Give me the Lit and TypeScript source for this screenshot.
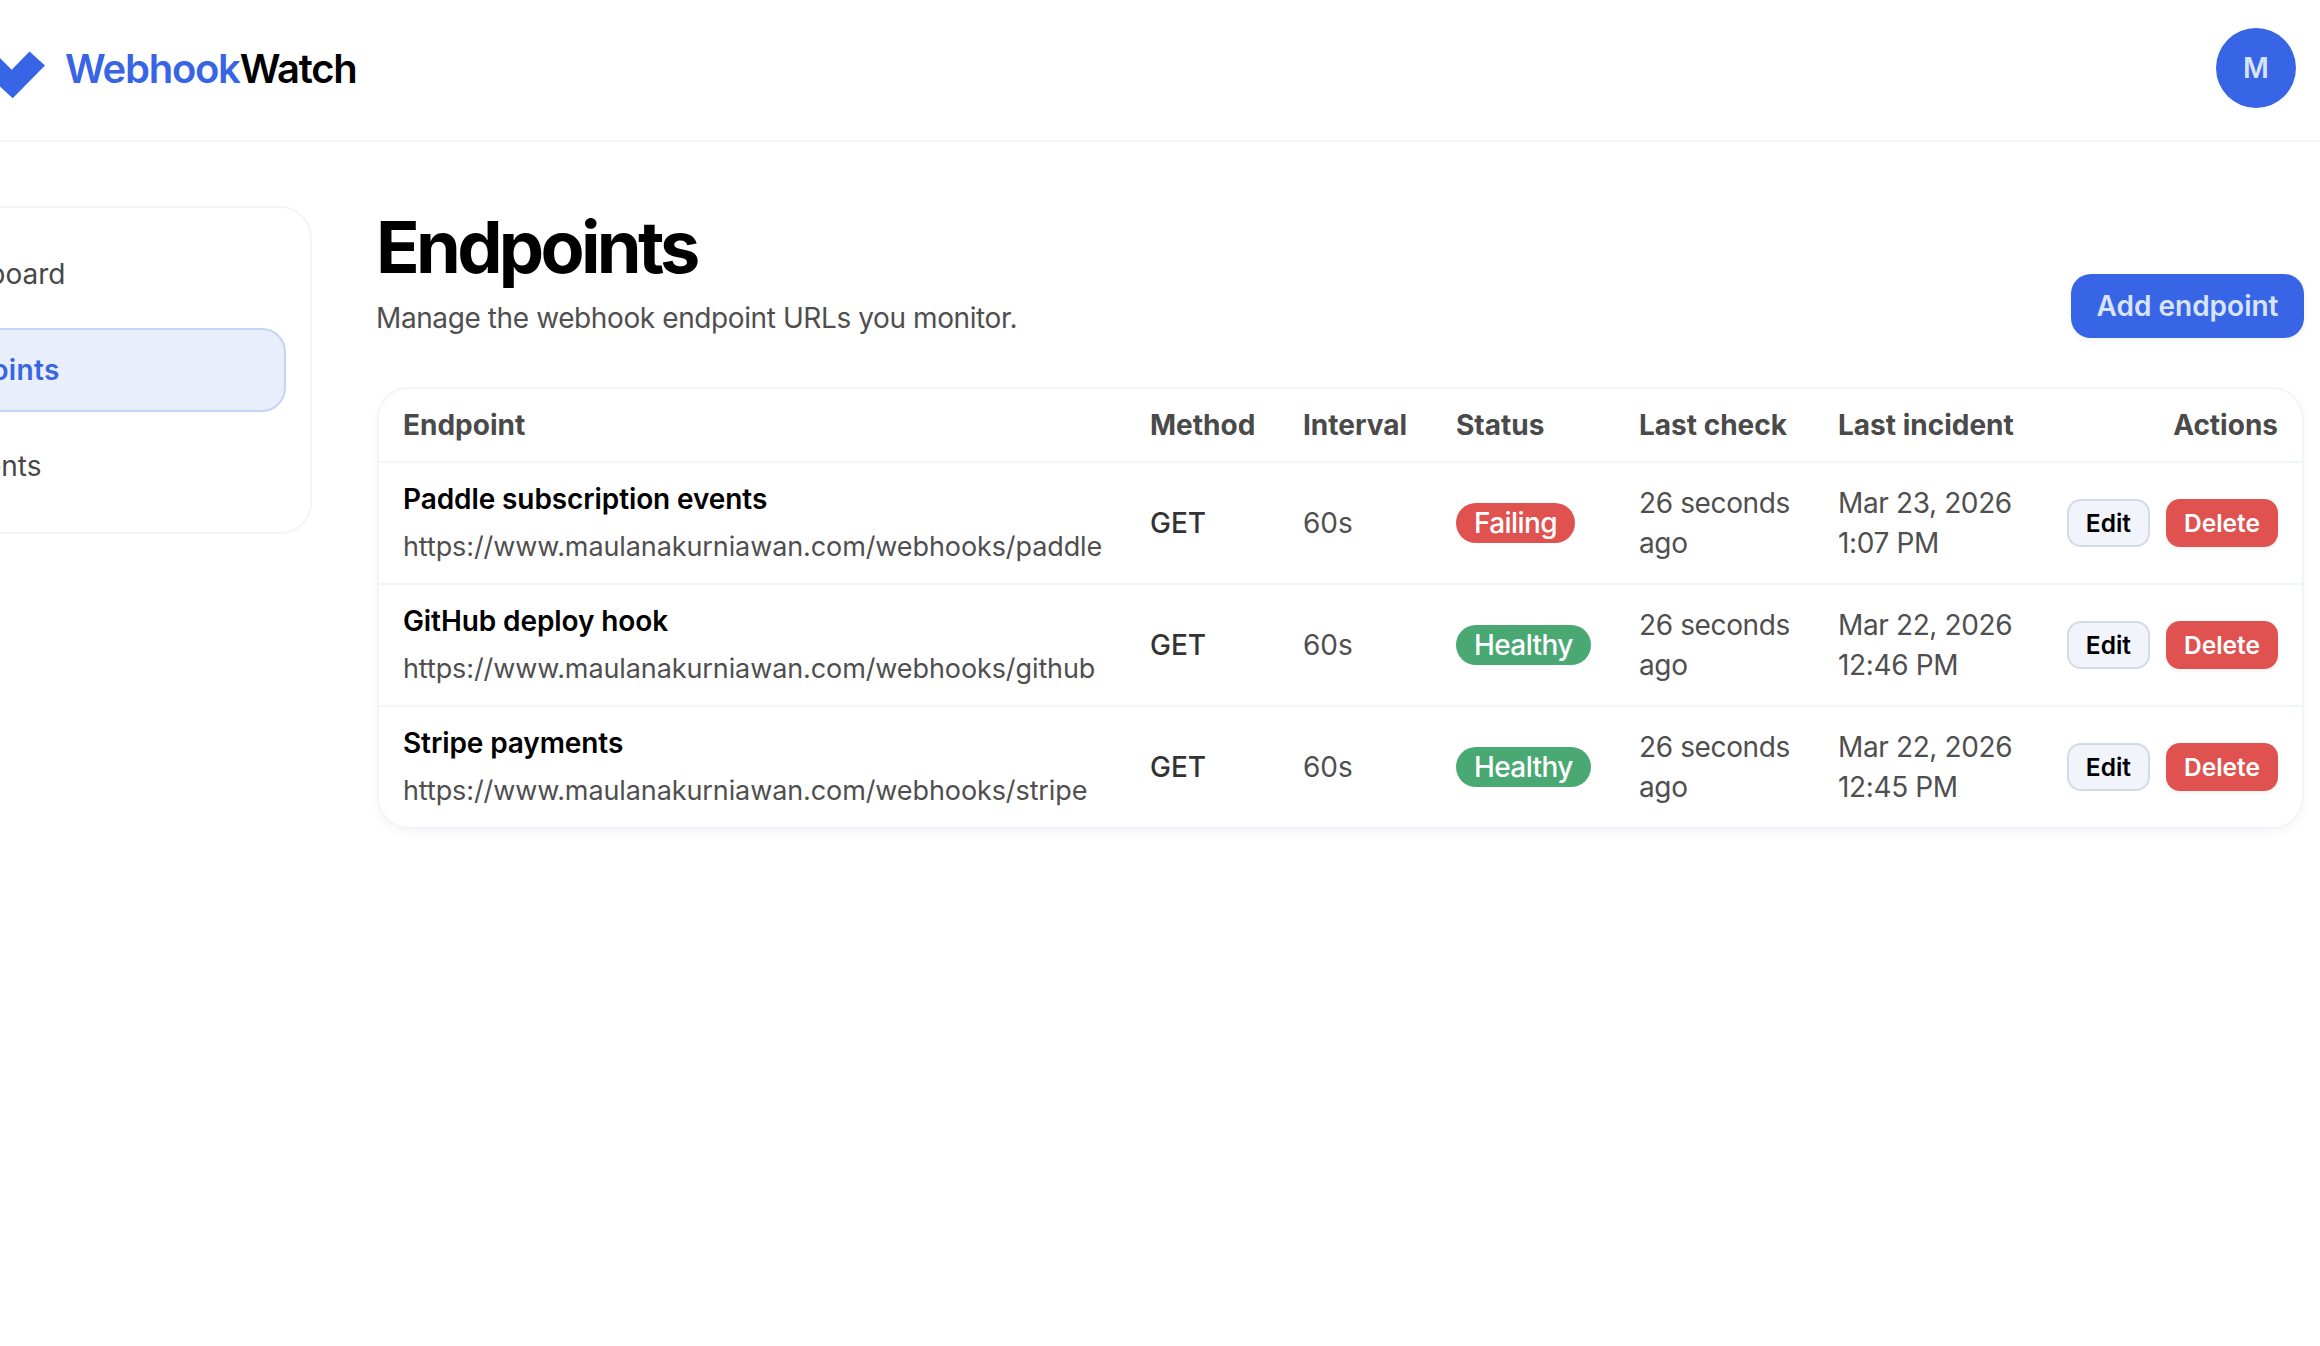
import { html, css, LitElement } from 'lit';
import { customElement } from 'lit/decorators.js';

interface Endpoint {
  name: string;
  url: string;
  status: 'Failing' | 'Healthy';
  incidentDate: string;
  incidentTime: string;
}

const ENDPOINTS: Endpoint[] = [
  {
    name: 'Paddle subscription events',
    url: 'https://www.maulanakurniawan.com/webhooks/paddle',
    status: 'Failing',
    incidentDate: 'Mar 23, 2026',
    incidentTime: '1:07 PM',
  },
  {
    name: 'GitHub deploy hook',
    url: 'https://www.maulanakurniawan.com/webhooks/github',
    status: 'Healthy',
    incidentDate: 'Mar 22, 2026',
    incidentTime: '12:46 PM',
  },
  {
    name: 'Stripe payments',
    url: 'https://www.maulanakurniawan.com/webhooks/stripe',
    status: 'Healthy',
    incidentDate: 'Mar 22, 2026',
    incidentTime: '12:45 PM',
  },
];

@customElement('app-root')
export class AppRoot extends LitElement {
  static styles = css`
    :host {
      display: block;
      width: 2320px;
      height: 1346px;
      overflow: hidden;
      background: #fff;
      color: #000;
      font-family: 'Inter', 'Liberation Sans', sans-serif;
      font-size: 28px;
    }

    /* the page sits scrolled sideways, so the left edge is cut off */
    .page {
      width: 2455px;
      margin-left: -135px;
    }

    .topbar {
      height: 142px;
      box-sizing: border-box;
      border-bottom: 2px solid #f1f5f9;
      display: flex;
      align-items: center;
      justify-content: space-between;
      padding: 0 24px 4px 117px;
    }

    .brand {
      display: flex;
      align-items: center;
      gap: 19px;
      font-size: 40px;
      font-weight: 600;
      letter-spacing: -1.25px;
    }

    .brand svg {
      display: block;
      margin-top: 14px;
    }

    .brand .accent {
      color: #3864e6;
    }

    .avatar {
      width: 80px;
      height: 80px;
      border-radius: 50%;
      background: #3864e6;
      color: #d8e3fd;
      font-size: 28px;
      font-weight: 600;
      display: flex;
      align-items: center;
      justify-content: center;
    }

    .layout {
      display: flex;
      align-items: flex-start;
      gap: 65px;
      padding: 64px 16px 0 0;
    }

    .sidebar {
      width: 447px;
      flex: none;
      box-sizing: border-box;
      border: 2px solid #f1f5f9;
      border-radius: 32px;
      padding: 24px;
      display: flex;
      flex-direction: column;
      gap: 12px;
    }

    .nav-item {
      height: 84px;
      box-sizing: border-box;
      display: flex;
      align-items: center;
      padding: 0 28px;
      border: 2px solid transparent;
      border-radius: 24px;
      color: #484848;
    }

    .nav-item.active {
      background: #e8eefb;
      border-color: #c5d4f6;
      color: #3864e6;
      font-weight: 600;
      letter-spacing: 0.35px;
    }

    .main {
      flex: 1;
      min-width: 0;
    }

    .heading {
      display: flex;
      align-items: flex-end;
      justify-content: space-between;
    }

    h1 {
      margin: -3px 0 0 -1px;
      font-size: 72px;
      line-height: 88px;
      font-weight: 700;
      letter-spacing: -3.7px;
    }

    .subtitle {
      margin: 7px 0 0 -1px;
      line-height: 40px;
      color: #4f4f4f;
      letter-spacing: -0.4px;
    }

    .add {
      width: 233px;
      height: 64px;
      border: none;
      border-radius: 20px;
      background: #3864e6;
      color: #d8e3fd;
      font: 600 28px 'Inter', 'Liberation Sans', sans-serif;
      box-shadow: 0 2px 6px rgba(15, 23, 42, 0.06);
    }

    .card {
      margin-top: 49px;
      border: 2px solid #f1f5f9;
      border-radius: 32px;
      overflow: hidden;
      box-shadow: 0 4px 10px rgba(15, 23, 42, 0.04);
    }

    table {
      width: 100%;
      table-layout: fixed;
      border-collapse: collapse;
    }

    th {
      height: 72px;
      padding: 0 24px;
      text-align: left;
      font-weight: 700;
      color: #4a4a4a;
    }

    td {
      height: 120px;
      padding: 0 24px;
      line-height: 40px;
      color: #4f4f4f;
      border-top: 2px solid #f1f5f9;
    }

    .right {
      text-align: right;
    }

    .name {
      font-weight: 600;
      color: #000;
      letter-spacing: -0.1px;
    }

    .url {
      margin-top: 8px;
      font-size: 27px;
      letter-spacing: -0.1px;
      white-space: nowrap;
    }

    .method {
      font-weight: 500;
      color: #333;
    }

    .time {
      letter-spacing: -0.37px;
      white-space: nowrap;
    }

    .badge {
      display: inline-block;
      height: 40px;
      line-height: 40px;
      padding: 0 18px;
      border-radius: 20px;
      color: #fff;
      font-weight: 500;
      letter-spacing: -0.6px;
    }

    .badge.failing {
      background: #e0524f;
    }

    .badge.healthy {
      background: #4aa873;
    }

    .actions {
      display: flex;
      justify-content: flex-end;
      gap: 16px;
    }

    .btn {
      height: 48px;
      box-sizing: border-box;
      border-radius: 14px;
      font: 600 24.5px 'Inter', 'Liberation Sans', sans-serif;
    }

    .btn.edit {
      padding: 0 17px;
      background: #f1f5fb;
      border: 2px solid #d3dbe8;
      color: #000;
    }

    .btn.delete {
      padding: 0 18px;
      background: #e0524f;
      border: none;
      color: #fff;
      box-shadow: 0 2px 4px rgba(15, 23, 42, 0.06);
    }
  `;

  private renderRow(row: Endpoint) {
    return html`
      <tr>
        <td>
          <div class="name">${row.name}</div>
          <div class="url">${row.url}</div>
        </td>
        <td><span class="method">GET</span></td>
        <td>60s</td>
        <td><span class="badge ${row.status.toLowerCase()}">${row.status}</span></td>
        <td class="time">26 seconds<br />ago</td>
        <td class="time">${row.incidentDate}<br />${row.incidentTime}</td>
        <td>
          <div class="actions">
            <button class="btn edit">Edit</button>
            <button class="btn delete">Delete</button>
          </div>
        </td>
      </tr>
    `;
  }

  render() {
    return html`
      <div class="page">
        <header class="topbar">
          <div class="brand">
            <svg width="64" height="52" viewBox="0 0 64 52">
              <path fill="#3864e6" d="M15 6 L29.7 20.7 L47.5 2.5 L63 16.5 L30.7 49.3 L0 21 Z" />
            </svg>
            <span><span class="accent">Webhook</span>Watch</span>
          </div>
          <div class="avatar">M</div>
        </header>
        <div class="layout">
          <nav class="sidebar">
            <div class="nav-item">Dashboard</div>
            <div class="nav-item active">Endpoints</div>
            <div class="nav-item">Incidents</div>
          </nav>
          <main class="main">
            <div class="heading">
              <div>
                <h1>Endpoints</h1>
                <p class="subtitle">Manage the webhook endpoint URLs you monitor.</p>
              </div>
              <button class="add">Add endpoint</button>
            </div>
            <div class="card">
              <table>
                <colgroup>
                  <col style="width: 747px" />
                  <col style="width: 153px" />
                  <col style="width: 153px" />
                  <col style="width: 183px" />
                  <col style="width: 199px" />
                  <col style="width: 231px" />
                  <col />
                </colgroup>
                <thead>
                  <tr>
                    <th>Endpoint</th>
                    <th>Method</th>
                    <th>Interval</th>
                    <th>Status</th>
                    <th>Last check</th>
                    <th>Last incident</th>
                    <th class="right">Actions</th>
                  </tr>
                </thead>
                <tbody>
                  ${ENDPOINTS.map((row) => this.renderRow(row))}
                </tbody>
              </table>
            </div>
          </main>
        </div>
      </div>
    `;
  }
}
